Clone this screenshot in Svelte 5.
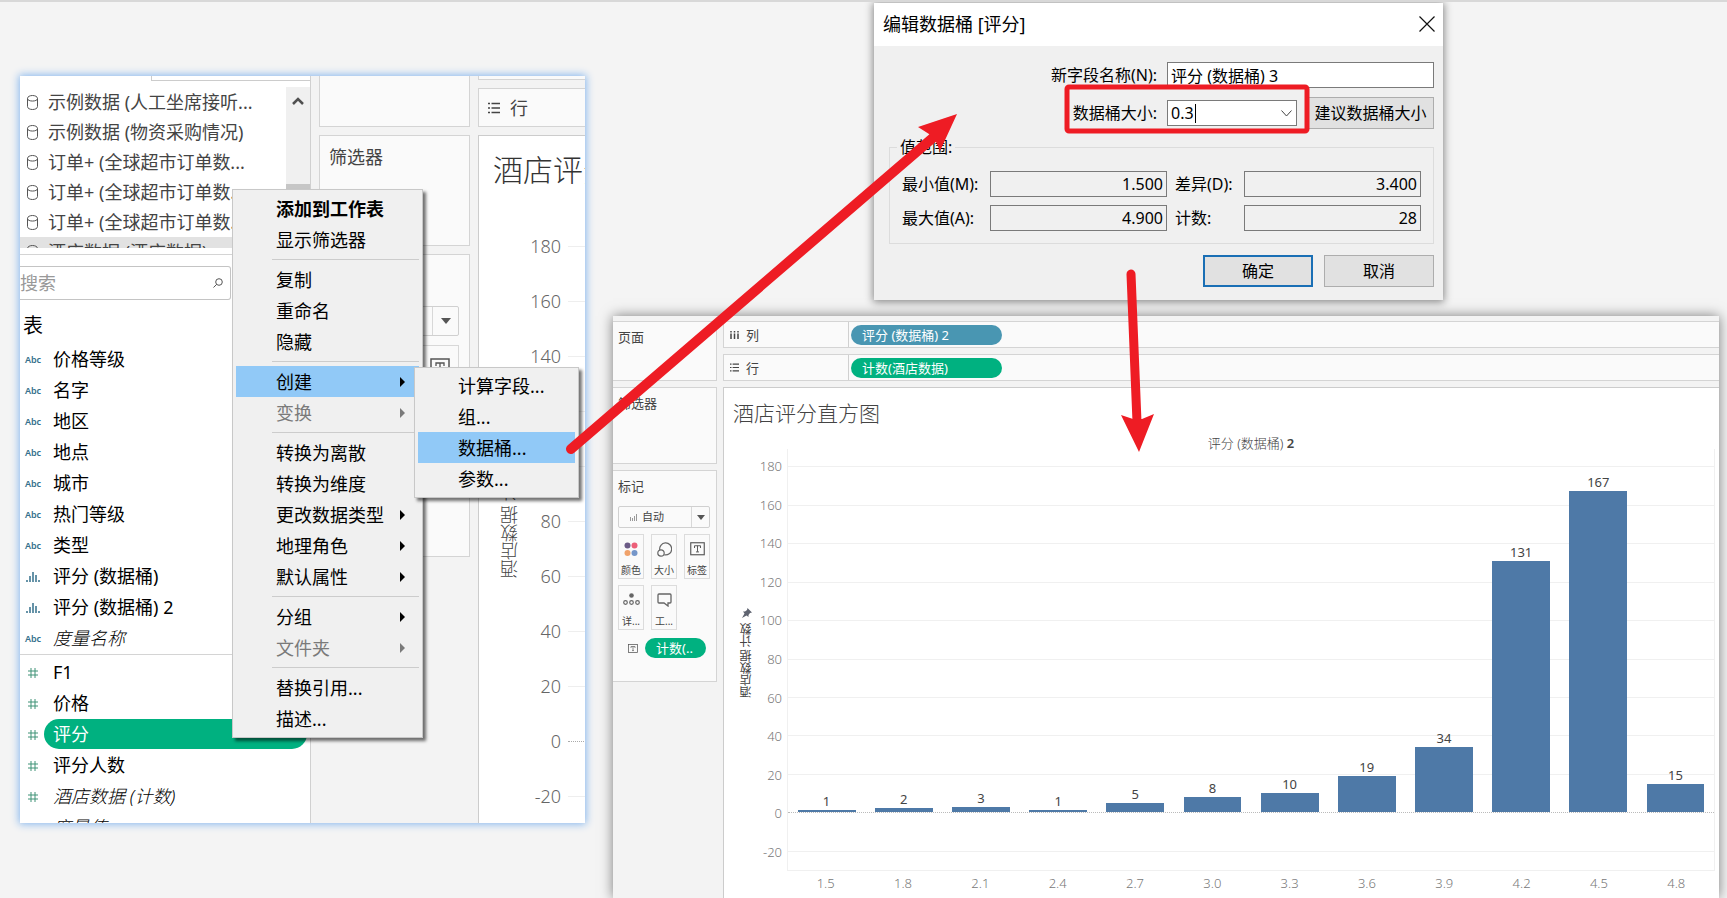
<script lang="ts">
  type Field = { name: string; kind: 'abc' | 'bin' | 'num'; italic?: boolean; selected?: boolean };
  type MenuItem = { label: string; bold?: boolean; disabled?: boolean; arrow?: boolean; open?: boolean };

  const sources = [
    '示例数据 (人工坐席接听...',
    '示例数据 (物资采购情况)',
    '订单+ (全球超市订单数...',
    '订单+ (全球超市订单数...',
    '订单+ (全球超市订单数...',
    '酒店数据 (酒店数据)'
  ];

  const dimensions: Field[] = [
    { name: '价格等级', kind: 'abc' },
    { name: '名字', kind: 'abc' },
    { name: '地区', kind: 'abc' },
    { name: '地点', kind: 'abc' },
    { name: '城市', kind: 'abc' },
    { name: '热门等级', kind: 'abc' },
    { name: '类型', kind: 'abc' },
    { name: '评分 (数据桶)', kind: 'bin' },
    { name: '评分 (数据桶) 2', kind: 'bin' },
    { name: '度量名称', kind: 'abc', italic: true }
  ];

  const measures: Field[] = [
    { name: 'F1', kind: 'num' },
    { name: '价格', kind: 'num' },
    { name: '评分', kind: 'num', selected: true },
    { name: '评分人数', kind: 'num' },
    { name: '酒店数据 (计数)', kind: 'num', italic: true },
    { name: '度量值', kind: 'num', italic: true }
  ];

  const menuGroups: MenuItem[][] = [
    [{ label: '添加到工作表', bold: true }, { label: '显示筛选器' }],
    [{ label: '复制' }, { label: '重命名' }, { label: '隐藏' }],
    [
      { label: '创建', arrow: true, open: true },
      { label: '变换', arrow: true, disabled: true }
    ],
    [
      { label: '转换为离散' },
      { label: '转换为维度' },
      { label: '更改数据类型', arrow: true },
      { label: '地理角色', arrow: true },
      { label: '默认属性', arrow: true }
    ],
    [
      { label: '分组', arrow: true },
      { label: '文件夹', arrow: true, disabled: true }
    ],
    [{ label: '替换引用...' }, { label: '描述...' }]
  ];

  const submenu = ['计算字段...', '组...', '数据桶...', '参数...'];
  let activeSub = $state('数据桶...');

  let search = $state('');
  let fieldName = $state('评分 (数据桶) 3');
  let binSize = $state('0.3');
  let markType = $state('自动');

  const ticks = [180, 160, 140, 120, 100, 80, 60, 40, 20, 0, -20];
  const yMax = 189;
  const yMin = -30;
  const span = yMax - yMin;

  const bins = [
    { label: '1.5', count: 1 },
    { label: '1.8', count: 2 },
    { label: '2.1', count: 3 },
    { label: '2.4', count: 1 },
    { label: '2.7', count: 5 },
    { label: '3.0', count: 8 },
    { label: '3.3', count: 10 },
    { label: '3.6', count: 19 },
    { label: '3.9', count: 34 },
    { label: '4.2', count: 131 },
    { label: '4.5', count: 167 },
    { label: '4.8', count: 15 }
  ];

  function fromTop(value: number): number {
    return ((yMax - value) / span) * 100;
  }
</script>

{#snippet textIcon(size: number)}
  <svg width={size} height={size * 0.9} viewBox="0 0 20 18" fill="none" stroke="#555" aria-hidden="true">
    <rect x="1" y="1" width="18" height="16" stroke-width="1.5" />
    <path d="M6 8V5h8v3M10 5v8M8 13.2h4" stroke-width="1.3" />
  </svg>
{/snippet}

{#snippet rowsIcon(size: number)}
  <svg width={size} height={size} viewBox="0 0 12 12" stroke="#444" stroke-width="1.5" aria-hidden="true">
    <path d="M0 1.5h2M3.5 1.5H12M0 6h2M3.5 6H12M0 10.5h2M3.5 10.5H12" />
  </svg>
{/snippet}

{#snippet fieldRow(field: Field)}
  <li class="field" class:italic={field.italic}>
    <span class="kind">
      {#if field.kind === 'abc'}
        <b>Abc</b>
      {:else if field.kind === 'bin'}
        <svg width="14" height="10" viewBox="0 0 14 10" stroke="#35708c" stroke-width="1.5" aria-hidden="true">
          <path d="M1 8v2M4 4v6M7 0v10M10 3v7M13 8v2" />
        </svg>
      {:else}
        <svg width="10" height="10" viewBox="0 0 10 10" stroke="#3f9277" aria-hidden="true">
          <path d="M3 0v10M7 0v10M0 3h10M0 7h10" />
        </svg>
      {/if}
    </span>
    <span class="name" class:selected={field.selected}>{field.name}</span>
  </li>
{/snippet}

<div class="desktop">
  <section class="window data-window">
    <div class="data-pane">
      <div class="tab-edge"></div>
      <div class="sources">
        <ul>
          {#each sources as source, i}
            <li class:current={i === sources.length - 1}>
              <svg width="11" height="15" viewBox="0 0 11 15" fill="none" stroke="#555" aria-hidden="true">
                <path d="M.5 3.5v8c0 4 10 4 10 0v-8c0-4-10-4-10 0c0 3.4 10 3.4 10 0" />
              </svg>
              {source}
            </li>
          {/each}
        </ul>
        <div class="scrollbar">
          <svg width="12" height="8" viewBox="0 0 12 8" fill="none" stroke="#505050" stroke-width="2.5" aria-hidden="true">
            <path d="M1 7l5-5 5 5" />
          </svg>
          <div class="thumb"></div>
        </div>
      </div>

      <div class="search">
        <input type="text" aria-label="搜索" placeholder="搜索" bind:value={search} />
        <svg width="10" height="10" viewBox="0 0 10 10" fill="none" stroke="#555" aria-hidden="true">
          <circle cx="6" cy="4" r="3.3" />
          <path d="M3.7 6.3L.5 9.5" />
        </svg>
      </div>

      <h2>表</h2>
      <ul>
        {#each dimensions as field}
          {@render fieldRow(field)}
        {/each}
      </ul>
      <ul class="measures">
        {#each measures as field}
          {@render fieldRow(field)}
        {/each}
      </ul>
    </div>

    <div class="shelves">
      <div class="card pages"></div>
      <div class="card filters">筛选器</div>
      <div class="card marks">
        <div class="type-edge">
          <span><i class="caret-down"></i></span>
        </div>
        <div class="label-edge">{@render textIcon(20)}</div>
      </div>
    </div>

    <div class="view">
      <div class="card columns"></div>
      <div class="card rows">{@render rowsIcon(12)} 行</div>
      <div class="sheet">
        <h3>酒店评分直方图</h3>
        <div class="axis">
          <div class="axis-title">酒店数据 计数</div>
          <ol>
            {#each ticks as tick}
              <li class:zero={tick === 0}>{tick}</li>
            {/each}
          </ol>
        </div>
      </div>
    </div>

    <ul class="menu context">
      {#each menuGroups as group, g}
        {#if g > 0}
          <li class="separator"></li>
        {/if}
        {#each group as item}
          <li class="entry">
            <button class:bold={item.bold} class:active={item.open} disabled={item.disabled}>
              {item.label}
              {#if item.arrow}
                <i class="caret-right"></i>
              {/if}
            </button>
            {#if item.open}
              <ul class="menu nested">
                {#each submenu as label}
                  <li class="entry">
                    <button class:active={label === activeSub} onclick={() => (activeSub = label)}>{label}</button>
                  </li>
                {/each}
              </ul>
            {/if}
          </li>
        {/each}
      {/each}
    </ul>
  </section>

  <section class="window workbook">
    <div class="side">
      <div class="card pages">页面</div>
      <div class="card filters">筛选器</div>
      <div class="card marks">
        标记
        <div class="mark-type">
          <svg width="7" height="7" viewBox="0 0 7 7" stroke="#999" aria-hidden="true">
            <path d="M.5 3v4M2.5 4v3M4.5 2v5M6.5 0v7" />
          </svg>
          <select aria-label="标记" bind:value={markType}>
            <option>自动</option>
          </select>
          <span><i class="caret-down"></i></span>
        </div>
        <div class="mark-buttons">
          <button>
            <svg width="14" height="15" viewBox="0 0 14 15" aria-hidden="true">
              <circle cx="3.5" cy="3.5" r="3" fill="#6b5b86" />
              <circle cx="10.5" cy="3.5" r="3" fill="#ec5f78" />
              <circle cx="3.5" cy="11" r="3" fill="#f0a26b" />
              <circle cx="10.5" cy="11" r="3" fill="#7596c9" />
            </svg>
            颜色
          </button>
          <button>
            <svg width="15" height="15" viewBox="0 0 15 15" fill="none" stroke="#666" stroke-width="1.2" aria-hidden="true">
              <path d="M2.8 8.2a6 6 0 1 1 4.5 4.6" />
              <circle cx="4" cy="11" r="3.2" />
            </svg>
            大小
          </button>
          <button>{@render textIcon(15)}标签</button>
          <button>
            <svg width="17" height="12" viewBox="0 0 17 12" fill="none" stroke="#666" stroke-width="1.2" aria-hidden="true">
              <circle cx="8.5" cy="2.5" r="2.3" fill="#666" stroke="none" />
              <circle cx="2.5" cy="9.5" r="1.8" />
              <circle cx="8.5" cy="9.5" r="1.8" />
              <circle cx="14.5" cy="9.5" r="1.8" />
            </svg>
            详...
          </button>
          <button>
            <svg width="15" height="14" viewBox="0 0 15 14" fill="none" stroke="#666" stroke-width="1.3" aria-hidden="true">
              <path d="M2 1h11q1 0 1 1v7q0 1-1 1h-2v3l-4-3H2q-1 0-1-1V2q0-1 1-1z" />
            </svg>
            工...
          </button>
        </div>
        <div class="encoding">
          {@render textIcon(10)}
          <span class="pill measure">计数(..</span>
        </div>
      </div>
    </div>

    <div class="main">
      <div class="shelf">
        <div class="shelf-name">
          <svg width="9" height="8" viewBox="0 0 9 8" stroke="#444" stroke-width="1.5" aria-hidden="true">
            <path d="M1 0v1.5M1 2.5V8M4.5 0v1.5M4.5 2.5V8M8 0v1.5M8 2.5V8" />
          </svg>
          列
        </div>
        <span class="pill dimension">评分 (数据桶) 2</span>
      </div>
      <div class="shelf">
        <div class="shelf-name">{@render rowsIcon(9)} 行</div>
        <span class="pill measure">计数(酒店数据)</span>
      </div>

      <div class="chart">
        <h1>酒店评分直方图</h1>
        <div class="chart-header">评分 (数据桶) <b>2</b></div>
        <div class="chart-body">
          <div class="axis-title">
            酒店数据 计数
            <svg width="10" height="10" viewBox="0 0 10 10" fill="#5f6470" aria-hidden="true">
              <path d="M4.5 10L0 5.500L2 5l1.500-2V1l2 1.500L10 0 7.500 4.500 9 6.500 7 6.500 5 8z" />
            </svg>
          </div>
          <div class="tick-labels">
            {#each ticks as tick}
              <span style:top="{fromTop(tick)}%">{tick}</span>
            {/each}
          </div>
          <div class="plot">
            {#each ticks as tick}
              <i class="grid-line" class:zero={tick === 0} style:top="{fromTop(tick)}%"></i>
            {/each}
            <div class="bars" style:height="{fromTop(0)}%">
              {#each bins as bin}
                <div class="bin">
                  <span>{bin.count}</span>
                  <div class="bar" style:height="{(bin.count / yMax) * 100}%"></div>
                </div>
              {/each}
            </div>
          </div>
          <div class="bin-labels">
            {#each bins as bin}
              <span>{bin.label}</span>
            {/each}
          </div>
        </div>
      </div>
    </div>
  </section>

  <section class="window dialog" role="dialog" aria-labelledby="dialog-title">
    <header>
      <span id="dialog-title">编辑数据桶 [评分]</span>
      <button aria-label="关闭">
        <svg width="16" height="16" viewBox="0 0 16 16" stroke="#111" stroke-width="1.2" aria-hidden="true">
          <path d="M.5.5l15 15M15.5.5l-15 15" />
        </svg>
      </button>
    </header>
    <form onsubmit={(e) => e.preventDefault()}>
      <div class="row">
        <label for="field-name">新字段名称(N):</label>
        <input id="field-name" type="text" bind:value={fieldName} />
      </div>
      <div class="row">
        <label for="bin-size">数据桶大小:</label>
        <div class="combo">
          <input id="bin-size" type="text" bind:value={binSize} />
          <i class="text-caret"></i>
          <svg width="11" height="7" viewBox="0 0 11 7" fill="none" stroke="#444" aria-hidden="true">
            <path d="M.5.5l5 5.5 5-5.5" />
          </svg>
        </div>
        <button type="button" class="suggest">建议数据桶大小</button>
      </div>
      <fieldset>
        <legend>值范围:</legend>
        <label for="min">最小值(M):</label>
        <input id="min" type="text" readonly value="1.500" />
        <label for="diff">差异(D):</label>
        <input id="diff" type="text" readonly value="3.400" />
        <label for="max">最大值(A):</label>
        <input id="max" type="text" readonly value="4.900" />
        <label for="count">计数:</label>
        <input id="count" type="text" readonly value="28" />
      </fieldset>
      <div class="actions">
        <button class="default">确定</button>
        <button type="button">取消</button>
      </div>
    </form>
  </section>

  <svg class="annotations" width="1727" height="898" viewBox="0 0 1727 898" aria-hidden="true">
    <g fill="none" stroke="#ee1c24" stroke-linecap="round">
      <path d="M571 449L935 136" stroke-width="10" />
      <path d="M1131 274L1137 422" stroke-width="9" />
      <rect x="1067" y="87" width="240" height="44" rx="2" stroke-width="5" />
    </g>
    <g fill="#ee1c24">
      <path d="M957 114L918 127L929 134L936 142L940 151z" />
      <path d="M1139 452L1121 415L1133 419H1142L1154 414z" />
    </g>
  </svg>
</div>

<style>
  :global(body) {
    margin: 0;
    background: #f4f4f4;
    color: #000;
    font-family: "Noto Sans", "Noto Sans CJK SC", sans-serif;
  }

  .desktop {
    position: relative;
    min-height: 100vh;
    box-sizing: border-box;
    border-top: 2px solid #d8d8d8;
    overflow: hidden;
  }

  .desktop *,
  .desktop *::before {
    box-sizing: border-box;
  }

  ul,
  ol {
    list-style: none;
    margin: 0;
    padding: 0;
  }

  h1,
  h2,
  h3 {
    margin: 0;
    font-weight: 300;
  }

  button,
  input,
  select {
    font: inherit;
    color: inherit;
  }

  svg {
    flex: none;
  }

  .window {
    position: absolute;
    isolation: isolate;
  }

  .card {
    background: #fafafa;
    border: 1px solid #d4d4d4;
  }

  .caret-down {
    border: 5px solid transparent;
    border-top: 6px solid #555;
    border-bottom: 0;
  }

  /* data pane window */

  .data-window {
    left: 20px;
    top: 74px;
    width: 565px;
    height: 747px;
    display: flex;
    gap: 8px;
    background: #f3f3f3;
    box-shadow: 0 0 8px 1px #83b5ee;
    overflow: hidden;
    font-size: 18px;
    line-height: 30px;
  }

  .data-pane {
    flex: none;
    width: 291px;
    background: #fff;
    border-right: 1px solid #d0d0d0;
  }

  .tab-edge {
    width: 159px;
    height: 5px;
    margin: 0 0 6px auto;
    border: solid #ccc;
    border-width: 0 0 1px 1px;
  }

  .sources {
    display: flex;
    height: 161px;
    overflow: hidden;
    color: #444;
  }

  .sources ul {
    flex: 1;
  }

  .sources li {
    display: flex;
    align-items: center;
    gap: 10px;
    height: 30px;
    padding-left: 7px;
    white-space: nowrap;
  }

  .sources li.current {
    background: #e2e2e2;
  }

  .scrollbar {
    display: flex;
    flex-direction: column;
    align-items: center;
    width: 24px;
    padding-top: 10px;
    background: #f0f0f0;
  }

  .thumb {
    width: 24px;
    flex: 1;
    margin-top: 79px;
    background: #c6c6c6;
  }

  .search {
    display: flex;
    align-items: center;
    height: 46px;
    margin-top: 6px;
    padding: 11px 0 0;
    border-top: 1px solid #d4d4d4;
  }

  .search input {
    width: 211px;
    height: 34px;
    padding: 0;
    border: 1px solid #c4c4c4;
    border-left: 0;
    border-radius: 0 3px 3px 0;
    background: #fff;
    outline: 0;
  }

  .search input::placeholder {
    color: #999;
  }

  .search svg {
    margin-left: -18px;
  }

  h2 {
    padding-left: 3px;
    margin-top: 8px;
    font-size: 20px;
    font-weight: 400;
    line-height: 36px;
  }

  .measures {
    padding-top: 2px;
    border-top: 1px solid #d4d4d4;
  }

  .field {
    display: flex;
    height: 31px;
    white-space: nowrap;
  }

  .kind {
    display: flex;
    align-items: center;
    justify-content: center;
    width: 24px;
    padding-left: 2px;
    color: #35708c;
    font-size: 9px;
    font-style: normal;
  }

  .kind b {
    font-weight: 600;
  }

  .name {
    flex: 1;
    height: 30px;
    margin-right: 3px;
    padding-left: 9px;
  }

  .name.selected {
    border-radius: 15px;
    background: #00b180;
    color: #fff;
  }

  .italic .name {
    font-style: italic;
    font-weight: 300;
  }

  .shelves {
    flex: none;
    width: 151px;
    display: flex;
    flex-direction: column;
    gap: 8px;
    color: #444;
  }

  .shelves .pages {
    height: 51px;
    border-top: 0;
  }

  .shelves .filters {
    height: 111px;
    padding: 6px 9px;
  }

  .shelves .marks {
    height: 303px;
    padding: 51px 10px 0 60px;
  }

  .type-edge {
    display: flex;
    justify-content: flex-end;
    height: 30px;
    border: 1px solid #d0d0d0;
    border-radius: 2px;
  }

  .type-edge span {
    display: grid;
    place-items: center;
    width: 26px;
    border-left: 1px solid #d8d8d8;
  }

  .label-edge {
    display: flex;
    justify-content: flex-end;
    height: 60px;
    margin-top: 9px;
    padding: 12px 8px;
    border: 1px solid #d8d8d8;
  }

  .view {
    flex: 1;
    display: flex;
    flex-direction: column;
    gap: 8px;
    min-width: 0;
  }

  .view .columns {
    height: 4px;
    border-width: 0 0 1px 1px;
  }

  .view .rows {
    display: flex;
    align-items: center;
    gap: 10px;
    height: 39px;
    padding-left: 9px;
    border-right: 0;
    color: #444;
  }

  .sheet {
    flex: 1;
    padding: 16px 0 0 14px;
    background: #fff;
    border: solid #ccc;
    border-width: 1px 0 0 1px;
    overflow: hidden;
    white-space: nowrap;
    color: #666;
    font-weight: 300;
  }

  .sheet h3 {
    font-size: 30px;
    line-height: 36px;
    color: #333;
  }

  .axis {
    display: flex;
    margin-top: 43px;
  }

  .axis-title {
    writing-mode: vertical-rl;
    transform: rotate(180deg);
    color: #444;
  }

  .sheet .axis-title {
    width: 34px;
    height: 347px;
    line-height: 34px;
  }

  .axis ol {
    flex: 1;
  }

  .axis li {
    position: relative;
    width: 34px;
    margin-bottom: 25px;
    line-height: 30px;
    text-align: right;
  }

  .axis li::before {
    content: "";
    position: absolute;
    top: 15px;
    left: 41px;
    width: 24px;
    border-top: 1px solid #eee;
  }

  .axis li.zero::before {
    border-top: 1px dotted #aaa;
  }

  /* menus */

  .menu {
    position: absolute;
    padding: 3px;
    background: #f0f0f0;
    border: 1px solid #c8c8c8;
    box-shadow: 3px 3px 3px rgba(0, 0, 0, 0.55);
    color: #000;
  }

  .context {
    left: 212px;
    top: 113px;
    width: 191px;
  }

  .nested {
    left: 178px;
    top: 1px;
    width: 165px;
    padding: 2px 3px 3px;
    z-index: 1;
  }

  .entry {
    position: relative;
  }

  .menu button {
    display: flex;
    align-items: center;
    justify-content: space-between;
    width: 100%;
    height: 31px;
    padding: 0 14px 0 40px;
    border: 0;
    background: none;
    text-align: left;
    white-space: nowrap;
  }

  .menu button.active {
    background: #91c9f7;
  }

  .menu button.bold {
    font-weight: 700;
  }

  .menu button:disabled {
    color: #7a7a7a;
  }

  .caret-right {
    border: 5px solid transparent;
    border-left-color: currentColor;
    border-right: 0;
  }

  .separator {
    height: 9px;
    margin-left: 36px;
    border-bottom: 4px solid #f0f0f0;
    background: linear-gradient(#ccc, #ccc) bottom / 100% 1px no-repeat padding-box;
  }

  /* workbook window */

  .workbook {
    left: 613px;
    right: 8px;
    top: 314px;
    bottom: 0;
    display: flex;
    gap: 6px;
    padding-top: 5px;
    background: #f3f3f3;
    box-shadow: 0 0 12px rgba(0, 0, 0, 0.5);
    font-size: 13px;
    line-height: 18px;
    color: #444;
  }

  .side {
    flex: none;
    width: 104px;
    display: flex;
    flex-direction: column;
    gap: 6px;
  }

  .side .card {
    padding: 6px 6px 6px 5px;
    border-left: 0;
  }

  .side .pages {
    height: 60px;
  }

  .side .filters {
    height: 77px;
  }

  .side .marks {
    height: 212px;
  }

  .mark-type {
    display: flex;
    align-items: center;
    height: 22px;
    margin-top: 11px;
    padding-left: 11px;
    border: 1px solid #d0d0d0;
    border-radius: 2px;
    font-size: 11px;
  }

  .mark-type select {
    flex: 1;
    min-width: 0;
    height: 20px;
    padding: 0 0 0 5px;
    border: 0;
    background: none;
    appearance: none;
  }

  .mark-type span {
    display: grid;
    place-items: center;
    width: 18px;
    height: 20px;
    border-left: 1px solid #d8d8d8;
  }

  .mark-type .caret-down {
    border-width: 5px 4px 0;
  }

  .mark-buttons {
    display: grid;
    grid-template-columns: repeat(3, 26px);
    gap: 6px 7px;
    margin-top: 6px;
  }

  .mark-buttons button {
    display: flex;
    flex-direction: column;
    align-items: center;
    justify-content: space-between;
    height: 45px;
    padding: 7px 0 1px;
    border: 1px solid #dcdcdc;
    background: #fafafa;
    font-size: 10px;
    line-height: 14px;
    white-space: nowrap;
  }

  .encoding {
    display: flex;
    align-items: center;
    gap: 7px;
    margin-top: 8px;
    padding-left: 10px;
  }

  .pill {
    height: 20px;
    border-radius: 10px;
    padding: 0 11px;
    color: #fff;
    font-size: 13px;
    line-height: 20px;
    white-space: nowrap;
  }

  .pill.dimension {
    background: #4996b2;
  }

  .pill.measure {
    background: #00b180;
  }

  .encoding .pill {
    width: 61px;
  }

  .main {
    flex: 1;
    display: flex;
    flex-direction: column;
    gap: 6px;
    min-width: 0;
  }

  .shelf {
    display: flex;
    align-items: center;
    gap: 2px;
    height: 27px;
    background: #fafafa;
    border: solid #d4d4d4;
    border-width: 1px 0 1px 1px;
  }

  .shelf-name {
    display: flex;
    align-items: center;
    gap: 7px;
    width: 125px;
    height: 100%;
    padding-left: 6px;
    border-right: 1px solid #d0d0d0;
  }

  .shelf .pill {
    width: 151px;
  }

  .chart {
    flex: 1;
    display: flex;
    flex-direction: column;
    padding: 9px 4px 0 9px;
    background: #fff;
    border: solid #ccc;
    border-width: 1px 0 0 1px;
  }

  h1 {
    font-size: 21px;
    line-height: 32px;
  }

  .chart-header {
    padding-left: 54px;
    margin-top: 5px;
    font-size: 13px;
    font-weight: 300;
    line-height: 18px;
    text-align: center;
  }

  .chart-header b {
    font-weight: 600;
  }

  .chart-body {
    flex: 1;
    display: grid;
    grid-template-columns: 28px 26px 1fr;
    grid-template-rows: 1fr 27px;
    margin-top: -3px;
  }

  .chart .axis-title {
    display: flex;
    align-items: center;
    justify-content: center;
    gap: 4px;
    width: 28px;
    padding-top: 14px;
    font-size: 12px;
    line-height: 16px;
  }

  .tick-labels {
    position: relative;
    color: #777;
    font-weight: 300;
  }

  .tick-labels span {
    position: absolute;
    right: 5px;
    transform: translateY(-50%);
  }

  .plot {
    position: relative;
    border: solid #f0f0f0;
    border-width: 0 1px 1px;
  }

  .grid-line {
    position: absolute;
    left: 0;
    right: 0;
    border-top: 1px solid #f0f0f0;
  }

  .grid-line.zero {
    border-top: 1px dotted #bbb;
  }

  .bars {
    position: relative;
    display: flex;
  }

  .bin {
    flex: 1;
    display: flex;
    flex-direction: column;
    align-items: center;
    justify-content: flex-end;
  }

  .bar {
    width: 75%;
    flex: none;
    background: #4e79a7;
  }

  .bin-labels {
    grid-column: 3;
    display: flex;
    color: #777;
    font-weight: 300;
    line-height: 24px;
  }

  .bin-labels span {
    flex: 1;
    text-align: center;
  }

  /* dialog */

  .dialog {
    left: 874px;
    top: 1px;
    width: 569px;
    background: #f0f0f0;
    box-shadow: 0 1px 8px 1px rgba(0, 0, 0, 0.45);
    font-size: 16px;
    line-height: 24px;
  }

  .dialog header {
    display: flex;
    align-items: center;
    justify-content: space-between;
    height: 43px;
    padding: 0 8px 2px 9px;
    background: #fff;
    font-size: 18px;
  }

  .dialog header button {
    display: flex;
    padding: 0;
    border: 0;
    background: none;
  }

  form {
    padding: 13px 9px 13px 15px;
  }

  .row {
    display: grid;
    grid-template-columns: 268px 130px 1fr;
    align-items: center;
    column-gap: 10px;
    height: 32px;
    margin-bottom: 6px;
  }

  .row label {
    text-align: right;
  }

  .dialog input {
    width: 100%;
    height: 26px;
    min-width: 0;
    padding: 0 3px;
    border: 1px solid #7a7a7a;
    background: #fff;
    outline: 0;
  }

  .row > input {
    grid-column: 2 / 4;
  }

  .combo {
    position: relative;
    display: flex;
    align-items: center;
  }

  .combo svg {
    flex: none;
    margin-left: -16px;
  }

  .text-caret {
    position: absolute;
    left: 28px;
    width: 1px;
    height: 19px;
    background: #000;
  }

  .dialog form button {
    height: 32px;
    padding: 0;
    border: 1px solid #adadad;
    background: #e1e1e1;
    white-space: nowrap;
  }

  fieldset {
    display: grid;
    grid-template-columns: 80px 177px 61px 177px;
    align-items: center;
    gap: 8px;
    margin: 0;
    padding: 12px;
    border: 1px solid #dcdcdc;
    white-space: nowrap;
  }

  legend {
    padding: 0 3px;
    margin-left: -5px;
  }

  .dialog fieldset input {
    background: #f0f0f0;
    text-align: right;
  }

  .actions {
    display: flex;
    justify-content: flex-end;
    gap: 11px;
    margin-top: 11px;
  }

  .actions button {
    width: 110px;
  }

  .dialog .actions .default {
    border: 2px solid #1a6fb5;
  }

  .annotations {
    position: absolute;
    left: 0;
    top: -2px;
    z-index: 2;
    pointer-events: none;
  }
</style>
